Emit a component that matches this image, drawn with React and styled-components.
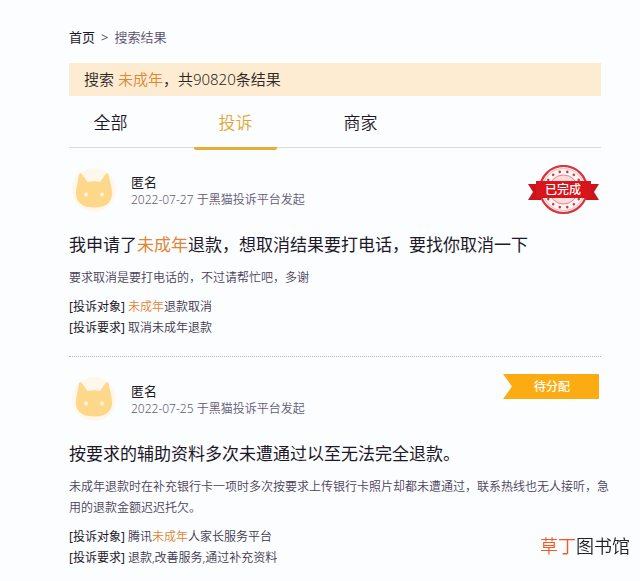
import styled, { createGlobalStyle } from "styled-components";
import { useState } from "react";

const GlobalStyle = createGlobalStyle`
  * {
    box-sizing: border-box;
  }
  body {
    margin: 0;
    background: #fcfdff;
    color: #1c1828;
    font-family: "Noto Sans", "Noto Sans CJK SC", sans-serif;
    font-size: 12px;
    line-height: 21px;
  }
`;

const Container = styled.div`
  padding: 27px 39px 0 69px;
`;

const Breadcrumb = styled.nav`
  display: flex;
  gap: 6px;
  font-size: 13px;
  color: #57506a;
`;

const HomeLink = styled.a`
  color: #1c1828;
  text-decoration: none;
`;

const Current = styled.span`
  font-weight: 350;
`;

const Summary = styled.div`
  margin-top: 15px;
  padding: 0 15px;
  background: #feecd2;
  color: #2b2424;
  font-size: 15px;
  font-weight: 350;
  line-height: 33px;
`;

const Highlight = styled.em`
  color: #dd8634;
  font-style: normal;
`;

const Tabs = styled.div`
  display: flex;
  gap: 42px;
  height: 52px;
  border-bottom: 1px solid #d9d9de;
`;

const Tab = styled.button`
  width: 83px;
  height: 54px;
  padding: 2px 0 0;
  border: none;
  border-bottom: 3px solid ${(props) => (props.$active ? "#e5ae35" : "transparent")};
  border-radius: 2px;
  background: none;
  color: ${(props) => (props.$active ? "#dfa83a" : "#1c1828")};
  font-family: inherit;
  font-size: 17px;
  font-weight: 350;
  line-height: 24px;
  cursor: pointer;
`;

const Item = styled.article`
  padding: 17px 0 18px;
  border-bottom: 1px dotted #b9b9c0;

  &:last-child {
    border-bottom: none;
    padding-bottom: 0;
  }
`;

const Header = styled.header`
  display: flex;
  align-items: flex-start;
  height: 50px;
  padding: 0 2px 0 3px;
`;

const Author = styled.div`
  flex: 1;
  padding: 8px 0 0 15px;
  line-height: 18px;
`;

const Name = styled.div`
  font-size: 13px;
`;

const Meta = styled.div`
  color: #625b72;
  font-weight: 350;
`;

const Ribbon = styled.span`
  width: 96px;
  padding-left: 2px;
  background: #fcac12;
  clip-path: polygon(0 0, 100% 0, 100% 100%, 0 100%, 9px 50%);
  color: #fff;
  font-weight: 500;
  line-height: 25px;
  text-align: center;
`;

const Title = styled.h2`
  margin: 18px 0 0;
  font-size: 17px;
  font-weight: 400;
  line-height: 24px;
`;

const TitleLink = styled.a`
  color: inherit;
  text-decoration: none;
`;

/* wider than the column so that the last character stays on the line */
const Text = styled.p`
  margin: 10px -8px 0 0;
  color: #4a4258;
  font-weight: 350;
`;

const Details = styled.dl`
  margin: 8px 0 0;
`;

const Row = styled.div`
  display: flex;
  gap: 3px;
`;

const Label = styled.dt``;

const Value = styled.dd`
  margin: 0;
  color: #40384d;
  font-weight: 350;
`;

const Watermark = styled.div`
  position: fixed;
  right: 10px;
  bottom: 23px;
  color: #222;
  font-size: 18px;
  font-weight: 350;
  line-height: 24px;

  span {
    color: #f9551f;
  }
`;

const keyword = "未成年";

const complaints = [
  {
    date: "2022-07-27",
    status: "done",
    title: "我申请了未成年退款，想取消结果要打电话，要找你取消一下",
    text: "要求取消是要打电话的，不过请帮忙吧，多谢",
    target: "未成年退款取消",
    demand: "取消未成年退款",
  },
  {
    date: "2022-07-25",
    status: "pending",
    title: "按要求的辅助资料多次未遭通过以至无法完全退款。",
    text: "未成年退款时在补充银行卡一项时多次按要求上传银行卡照片却都未遭通过，联系热线也无人接听，急用的退款金额迟迟托欠。",
    target: "腾讯未成年人家长服务平台",
    demand: "退款,改善服务,通过补充资料",
  },
];

const Marked = ({ text }) =>
  text.split(keyword).map((part, i) => (
    <span key={i}>
      {i > 0 && <Highlight>{keyword}</Highlight>}
      {part}
    </span>
  ));

const Avatar = () => (
  <svg width="44" height="50" viewBox="0 0 44 50" aria-hidden="true">
    <circle cx="22" cy="25" r="22" fill="#fef7ec" />
    <path
      d="M7 9.500C7.500 8 9 8 10 9.200L15.500 17Q22 15.500 28 17L33.500 9.200C34.500 8 36 8 36.500 9.500Q38 16 39.500 23Q41.500 33 36.500 38Q32 42.500 22 42.500Q12 42.500 7.500 38Q2.500 33 4.500 23Q6 16 7 9.500Z"
      fill="#fdd88a"
    />
    <circle cx="14" cy="29.500" r="2" fill="#fff4da" />
    <circle cx="30" cy="29.500" r="2" fill="#fff4da" />
  </svg>
);

const dots = [-58, -35, -12, 12, 35, 58, 122, 145, 168, 192, 215, 238];

const Stamp = () => (
  <svg width="71" height="52" viewBox="0 0 71 52" role="img" aria-label="已完成">
    <circle cx="35.500" cy="24.500" r="23.500" fill="#fff3f3" stroke="#d8343a" strokeWidth="2.200" />
    <circle cx="35.500" cy="24.500" r="21" fill="none" stroke="#f3b6b8" strokeWidth="1" />
    <circle cx="35.500" cy="24.500" r="14.500" fill="#fbdcdc" stroke="#e4878a" strokeWidth="1" />
    {dots.map((a) => (
      <circle key={a} cx="35.500" cy="6.500" r="1.300" fill="#b9444c" transform={`rotate(${a} 35.5 24.5)`} />
    ))}
    <path d="M0 19H13V35H0L5 27ZM71 19H58V35H71L66 27Z" fill="#c9141b" />
    <path d="M8 16H63V33H8Z" fill="#d8141c" />
    <text x="35" y="29" textAnchor="middle" fontSize="12" fontWeight="500" fill="#fff">
      已完成
    </text>
  </svg>
);

const Complaint = ({ item }) => (
  <Item>
    <Header>
      <Avatar />
      <Author>
        <Name>匿名</Name>
        <Meta>{item.date} 于黑猫投诉平台发起</Meta>
      </Author>
      {item.status === "done" ? <Stamp /> : <Ribbon>待分配</Ribbon>}
    </Header>
    <Title>
      <TitleLink href="#">
        <Marked text={item.title} />
      </TitleLink>
    </Title>
    <Text>{item.text}</Text>
    <Details>
      <Row>
        <Label>[投诉对象]</Label>
        <Value>
          <Marked text={item.target} />
        </Value>
      </Row>
      <Row>
        <Label>[投诉要求]</Label>
        <Value>{item.demand}</Value>
      </Row>
    </Details>
  </Item>
);

const App = () => {
  const [active, setActive] = useState("投诉");

  return (
    <>
      <GlobalStyle />
      <Container lang="zh-CN">
        <Breadcrumb>
          <HomeLink href="#">首页</HomeLink>
          <span>&gt;</span>
          <Current>搜索结果</Current>
        </Breadcrumb>
        <Summary>
          搜索 <Highlight>{keyword}</Highlight>，共90820条结果
        </Summary>
        <Tabs>
          {["全部", "投诉", "商家"].map((name) => (
            <Tab key={name} $active={name === active} onClick={() => setActive(name)}>
              {name}
            </Tab>
          ))}
        </Tabs>
        <main>
          {complaints.map((item) => (
            <Complaint key={item.date} item={item} />
          ))}
        </main>
      </Container>
      <Watermark>
        <span>草丁</span>图书馆
      </Watermark>
    </>
  );
};

export default App;
